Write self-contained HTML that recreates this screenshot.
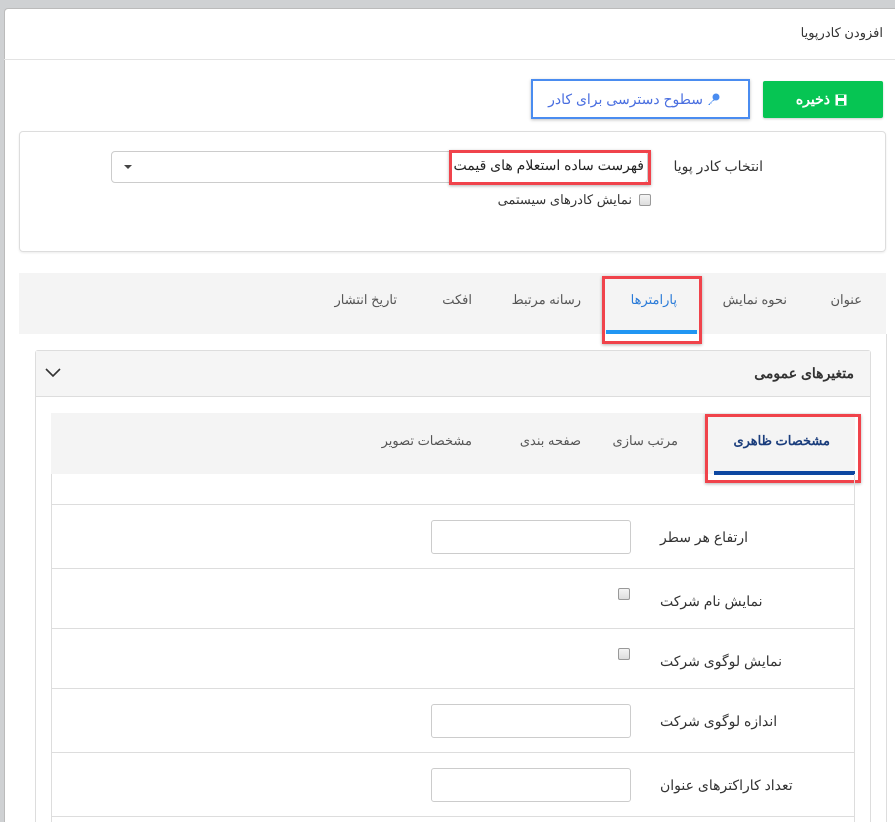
<!DOCTYPE html>
<html dir="rtl" style="width:895px;height:822px;overflow:hidden"><head><meta charset="utf-8">
<style>
*{box-sizing:border-box;margin:0;padding:0}
body{width:895px;height:822px;overflow:hidden;background:#cfd1d3;font-family:"Liberation Sans","Noto Sans CJK SC",sans-serif;font-size:13px;color:#333;position:relative}
.abs{position:absolute}
.page{position:absolute;left:4px;top:8px;width:891px;height:814px;background:#fff;border-radius:4px 0 0 0;border-left:1px solid #bbb;border-top:1px solid #bbb}
.t{position:absolute;white-space:nowrap;direction:rtl}
.lbl{position:absolute;white-space:nowrap;direction:rtl;font-size:14px;color:#333}
.inp{position:absolute;left:431px;width:200px;height:34px;border:1px solid #ccc;border-radius:3px;background:#fff}
.cb{position:absolute;width:12px;height:12px;border:1px solid #999;border-radius:2px;background:linear-gradient(#f4f4f4,#ddd)}
.hl{position:absolute;left:51px;width:804px;height:1px;background:#ddd}
.red{position:absolute;border:3px solid #f0434b;box-shadow:0 1px 3px rgba(0,0,0,.3)}
</style></head><body>
<div class="page"></div>
<div class="t" style="right:12px;top:25px;font-size:13px">افزودن کادرپویا</div>
<div class="abs" style="left:4px;top:59px;width:891px;height:1px;background:#e3e3e3"></div>

<div class="abs" style="left:763px;top:81px;width:120px;height:37px;background:#06c553;border-radius:2px;box-shadow:0 1px 2px rgba(0,0,0,.2)"></div>
<div class="t" style="right:65px;top:91px;color:#fff;font-weight:bold;font-size:14px">ذخیره</div>
<svg class="abs" style="left:835px;top:94px" width="12" height="12" viewBox="0 0 12 12"><rect x="0.5" y="0.5" width="11" height="11" fill="#fff"/><rect x="3" y="1" width="6" height="3" fill="#06c553"/><rect x="3" y="7" width="6" height="4" fill="#06c553"/></svg>
<div class="abs" style="left:531px;top:79px;width:219px;height:40px;border:2px solid #4a8cf0;background:#fff;box-shadow:0 1px 3px rgba(0,0,0,.25)"></div>
<div class="t" style="right:192px;top:91px;color:#4a6fe0;font-size:14px">سطوح دسترسی برای کادر</div>
<svg class="abs" style="left:707px;top:93px" width="13" height="13" viewBox="0 0 13 13"><circle cx="9" cy="4" r="3.5" fill="#4a8cf0"/><path d="M7 6 L1 12 L3 12 L3 10.5 L4.5 10.5 L4.5 9 L8 7" fill="#4a8cf0"/></svg>

<div class="abs" style="left:19px;top:131px;width:867px;height:121px;border:1px solid #ddd;border-radius:4px;box-shadow:0 1px 2px rgba(0,0,0,.08)"></div>
<div class="t" style="right:132px;top:158px;font-size:14px">انتخاب کادر پویا</div>
<div class="abs" style="left:111px;top:151px;width:537px;height:32px;border:1px solid #ccc;border-radius:4px"></div>
<div class="abs" style="left:124px;top:165px;border-left:4px solid transparent;border-right:4px solid transparent;border-top:4px solid #444"></div>
<div class="t" style="right:251px;top:157px;font-size:14px;color:#222">فهرست ساده استعلام های قیمت</div>
<div class="red" style="left:449px;top:150px;width:202px;height:35px"></div>
<div class="cb" style="left:639px;top:194px"></div>
<div class="t" style="right:263px;top:192px;font-size:13px">نمایش کادرهای سیستمی</div>

<div class="abs" style="left:19px;top:273px;width:867px;height:61px;background:#f4f4f4"></div>
<div class="t" style="right:33px;top:292px;font-size:13px;color:#555">عنوان</div>
<div class="t" style="right:108px;top:292px;font-size:13px;color:#555">نحوه نمایش</div>
<div class="t" style="right:218px;top:292px;font-size:13px;color:#2a7bd8">پارامترها</div>
<div class="t" style="right:314px;top:292px;font-size:13px;color:#555">رسانه مرتبط</div>
<div class="t" style="right:423px;top:292px;font-size:13px;color:#555">افکت</div>
<div class="t" style="right:498px;top:292px;font-size:13px;color:#555">تاریخ انتشار</div>
<div class="abs" style="left:606px;top:330px;width:91px;height:4px;background:#2196f3"></div>
<div class="red" style="left:602px;top:276px;width:100px;height:68px"></div>

<div class="abs" style="left:886px;top:334px;width:1px;height:488px;background:#ddd"></div>
<div class="abs" style="left:35px;top:350px;width:836px;height:480px;border:1px solid #ddd;border-radius:3px"></div>
<div class="abs" style="left:36px;top:351px;width:834px;height:46px;background:#f5f5f5;border-bottom:1px solid #ddd"></div>
<div class="t" style="right:41px;top:365px;font-size:14px;font-weight:bold;color:#333">متغیرهای عمومی</div>
<svg class="abs" style="left:45px;top:368px" width="16" height="10" viewBox="0 0 16 10"><path d="M1 1 L8 8 L15 1" fill="none" stroke="#333" stroke-width="1.6"/></svg>

<div class="abs" style="left:51px;top:413px;width:804px;height:61px;background:#f4f4f4"></div>
<div class="t" style="right:65px;top:433px;font-size:13px;color:#1a3d7c;font-weight:bold">مشخصات ظاهری</div>
<div class="t" style="right:217px;top:433px;font-size:13px;color:#555">مرتب سازی</div>
<div class="t" style="right:314px;top:433px;font-size:13px;color:#555">صفحه بندی</div>
<div class="t" style="right:423px;top:433px;font-size:13px;color:#555">مشخصات تصویر</div>
<div class="abs" style="left:714px;top:471px;width:141px;height:4px;background:#0d47a1"></div>
<div class="red" style="left:705px;top:414px;width:156px;height:69px"></div>

<div class="abs" style="left:51px;top:474px;width:1px;height:348px;background:#ddd"></div>
<div class="abs" style="left:854px;top:474px;width:1px;height:348px;background:#ddd"></div>
<div class="hl" style="top:504px"></div>
<div class="hl" style="top:568px"></div>
<div class="hl" style="top:628px"></div>
<div class="hl" style="top:688px"></div>
<div class="hl" style="top:752px"></div>
<div class="hl" style="top:816px"></div>

<div class="lbl" style="left:660px;top:529px">ارتفاع هر سطر</div>
<div class="inp" style="top:520px"></div>
<div class="lbl" style="left:660px;top:593px">نمایش نام شرکت</div>
<div class="cb" style="left:618px;top:588px"></div>
<div class="lbl" style="left:660px;top:653px">نمایش لوگوی شرکت</div>
<div class="cb" style="left:618px;top:648px"></div>
<div class="lbl" style="left:660px;top:713px">اندازه لوگوی شرکت</div>
<div class="inp" style="top:704px"></div>
<div class="lbl" style="left:660px;top:777px">تعداد کاراکترهای عنوان</div>
<div class="inp" style="top:768px"></div>
</body></html>
